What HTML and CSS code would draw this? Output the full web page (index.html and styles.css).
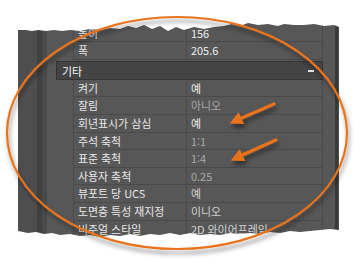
FILE: index.html
```html
<!DOCTYPE html>
<html lang="ko">
<head>
    <meta charset="UTF-8">
    <meta name="viewport" content="width=device-width, initial-scale=1.0">
    <title>특성 - 기타</title>
    <link rel="stylesheet" href="styles.css">
</head>
<body>
    <div class="shot">
        <div class="panel">
            <div class="gutter"></div>
            <div class="gutter-edge"></div>
            <div class="gutter-inner"></div>
            <div class="grid">
                <div class="row"><span class="name">높이</span><span class="val">156</span></div>
                <div class="row"><span class="name">폭</span><span class="val">205.6</span></div>

                <div class="cat">
                    <span>기타</span>
                    <i class="collapse"></i>
                </div>

                <div class="row"><span class="name">켜기</span><span class="val">예</span></div>
                <div class="row"><span class="name">잘림</span><span class="val dim">아니오</span></div>
                <div class="row"><span class="name">회년표시가 삼심</span><span class="val">예</span></div>
                <div class="row"><span class="name">주석 축척</span><span class="val dim">1:1</span></div>
                <div class="row"><span class="name">표준 축척</span><span class="val dim">1:4</span></div>
                <div class="row"><span class="name">사용자 축척</span><span class="val dim">0.25</span></div>
                <div class="row"><span class="name">뷰포트 당 UCS</span><span class="val soft">예</span></div>
                <div class="row"><span class="name">도면층 특성 재지정</span><span class="val soft">이니오</span></div>
                <div class="row"><span class="name">비주얼 스타일</span><span class="val soft">2D 와이어프레임</span></div>
            </div>
            <div class="rail"></div>
            <div class="rail-edge"></div>
        </div>

        <!-- пометки поверх скриншота -->
        <svg class="marks" width="361" height="268" viewBox="0 0 361 268">
            <defs>
                <filter id="sh" x="-10%" y="-10%" width="120%" height="130%">
                    <feDropShadow dx="1.5" dy="4" stdDeviation="2" flood-color="#000" flood-opacity="0.45"/>
                </filter>
            </defs>
            <g filter="url(#sh)">
                <ellipse cx="177" cy="133" rx="170" ry="116" fill="none" stroke="#e8731c" stroke-width="2.2"/>
                <line x1="240" y1="118.7" x2="274" y2="104" stroke="#e8731c" stroke-width="3.4" stroke-linecap="round"/>
                <polygon points="229.5,123.5 244.1,124.1 238.7,112.3" fill="#e8731c"/>
                <line x1="241" y1="155.6" x2="276" y2="140" stroke="#e8731c" stroke-width="3.4" stroke-linecap="round"/>
                <polygon points="230.7,160.5 245.2,161 239.8,149.2" fill="#e8731c"/>
            </g>
        </svg>
    </div>
</body>
</html>
```

FILE: styles.css
```css
:root {
    --panel-bg: #575757;
    --line: #4a4a4a;
    --text: #e8e8e8;
    --dim: #a9a9a9;
}

body {
    margin: 0;
    background-color: #ffffff;
    font-family: 'Noto Sans CJK KR', 'Noto Sans', sans-serif;
    font-size: 10.9px;
}

.shot {
    position: relative;
    width: 361px;
    height: 268px;
    overflow: hidden;
}

/* Панель свойств с рваными краями */
.panel {
    display: flex;
    width: 321px;
    height: 216px;
    margin: 22px 0 0 18px;
    clip-path: polygon(
        0 8px, 8px 8px, 14px 9px, 20px 8px, 28px 9px, 36px 8px, 44px 9px, 52px 8px,
        62px 9px, 72px 7px, 82px 8px, 92px 6px, 102px 7px, 110px 4px, 118px 6px,
        126px 3px, 134px 7px, 142px 4px, 150px 9px, 158px 5px, 166px 8px, 176px 5px,
        186px 7px, 196px 5px, 206px 4px, 214px 2px, 222px 4px, 230px 1px, 240px 3px,
        250px 2px, 260px 4px, 266px 2px, 276px 3px, 286px 3px, 296px 2px, 306px 4px,
        316px 3px, 321px 5px,
        321px 208px, 312px 207px, 302px 208px, 292px 209px, 282px 210px, 272px 209px,
        262px 211px, 252px 210px, 242px 212px, 232px 211px, 222px 212px, 212px 211px,
        202px 213px, 192px 212px, 182px 213px, 172px 211px, 162px 213px, 152px 211px,
        142px 213px, 132px 212px, 122px 214px, 112px 212px, 102px 214px, 92px 213px,
        82px 215px, 72px 213px, 62px 214px, 52px 212px, 42px 213px, 34px 211px,
        26px 212px, 18px 210px, 10px 211px, 0 209px
    );
}

.gutter {
    width: 19px;
    background-color: #4e4e4e;
}

.gutter-edge {
    width: 5px;
    background-color: #414141;
}

.gutter-inner {
    width: 5px;
    background-color: #4a4a4a;
}

.grid {
    flex: 1;
    padding: 2.6px 12px 0 9px;
    background-color: var(--panel-bg);
}

.rail {
    width: 3px;
    background-color: #3a3a3a;
}

.rail-edge {
    width: 1px;
    background-color: #4d4d4d;
}

.row {
    display: grid;
    grid-template-columns: 112px 1fr;
    height: 17.6px;
    margin-left: 17px;
    box-sizing: border-box;
    border-left: 1px solid var(--line);
    border-right: 1px solid var(--line);
    border-bottom: 1px solid var(--line);
    line-height: 16.6px;
    color: var(--text);
}

.row .name {
    padding-left: 4px;
    white-space: nowrap;
}

.row .val {
    padding-left: 4px;
    border-left: 1px solid var(--line);
    color: #f0f0f0;
    white-space: nowrap;
    overflow: hidden;
}

.row .val.dim {
    color: var(--dim);
}

.row .val.soft {
    color: #d4d4d4;
}

/* Заголовок категории */
.cat {
    display: flex;
    align-items: center;
    justify-content: space-between;
    height: 18.5px;
    margin-top: 1.6px;
    padding: 0 8px 0 5px;
    box-sizing: border-box;
    background-color: #444444;
    border: 1px solid #353535;
    color: #f5f5f5;
}

.collapse {
    display: block;
    width: 6px;
    height: 2px;
    background-color: #e4e4e4;
}

.marks {
    position: absolute;
    left: 0;
    top: 0;
}
```
